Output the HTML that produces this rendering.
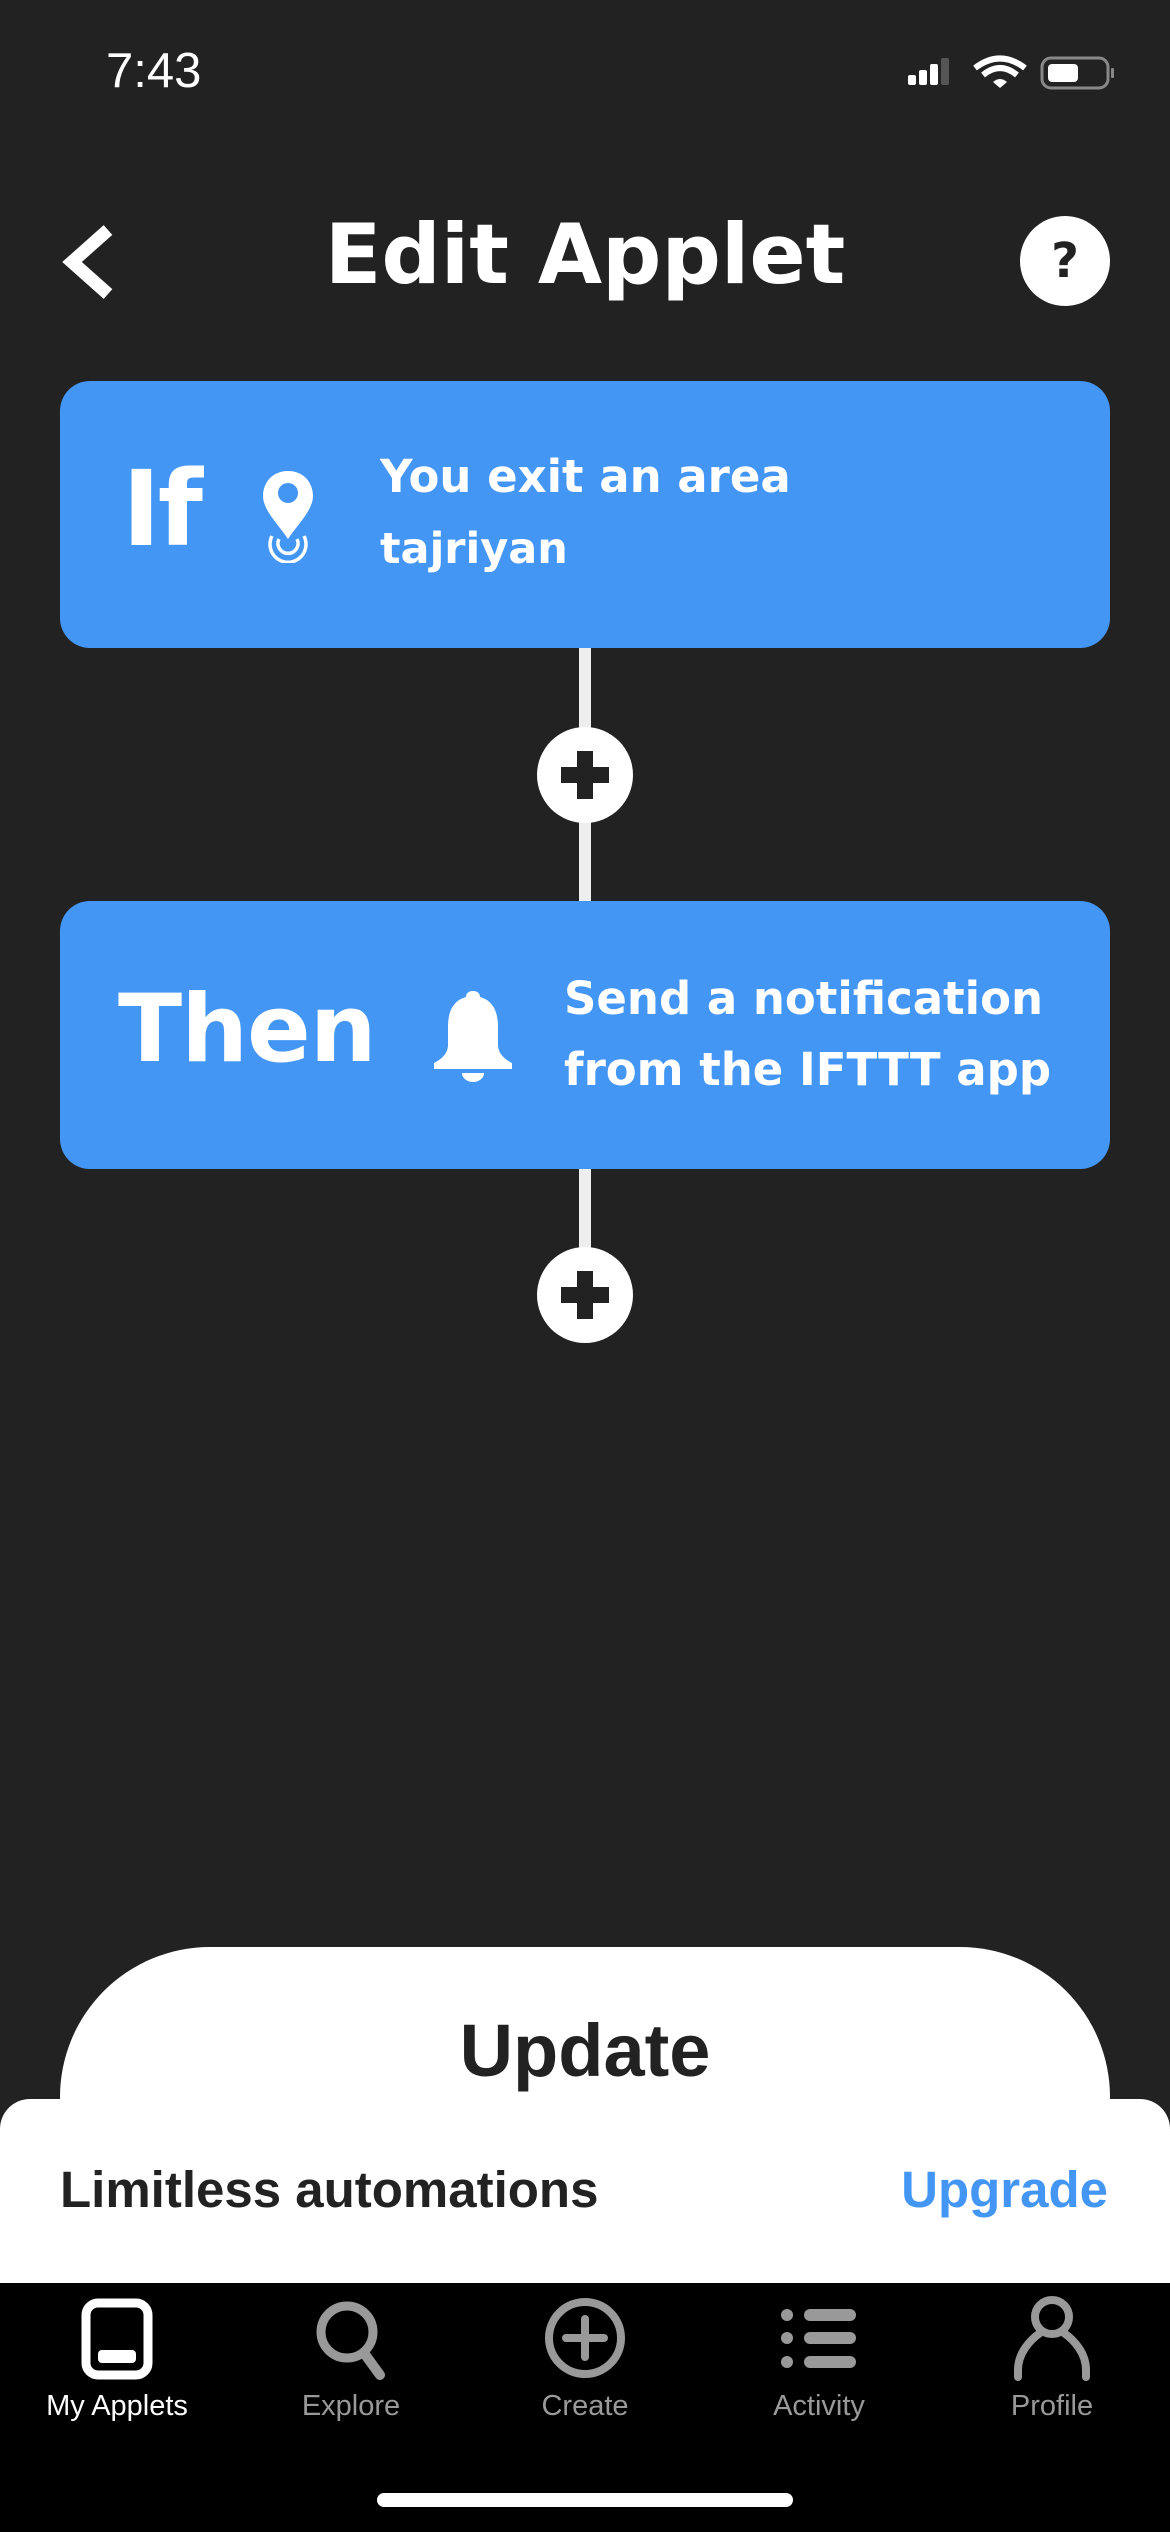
<!DOCTYPE html>
<html><head><meta charset="utf-8"><style>
*{margin:0;padding:0;box-sizing:border-box}
body{width:1170px;height:2532px;background:#222;position:relative;overflow:hidden;font-family:"Liberation Sans",sans-serif;color:#fff}
.a{position:absolute}
.card{position:absolute;left:60px;width:1050px;background:#4496f5;border-radius:30px}
.t{position:absolute;font-weight:bold;white-space:nowrap}
</style></head><body>
<div class="t" style="left:106px;top:43px;font-size:49px;font-weight:normal">7:43</div>
<svg class="a" style="left:900px;top:55px" width="220" height="40">
<rect x="8" y="20" width="8" height="10" rx="2" fill="#fff"/><rect x="19" y="15" width="8" height="15" rx="2" fill="#fff"/><rect x="30" y="9" width="8" height="21" rx="2" fill="#fff"/><rect x="41" y="3" width="8" height="27" rx="2" fill="#555"/>
<path d="M75 13 Q100 -6 125 13" stroke="#fff" stroke-width="6" fill="none"/><path d="M83 20 Q100 6 117 20" stroke="#fff" stroke-width="6" fill="none"/><path d="M93 27 L100 33 L107 27 Q100 21 93 27Z" fill="#fff"/>
<rect x="142" y="3" width="66" height="30" rx="9" stroke="#888" stroke-width="3" fill="none"/><rect x="148" y="9" width="30" height="18" rx="4" fill="#fff"/><rect x="211" y="13" width="3" height="10" rx="1" fill="#888"/>
</svg>
<svg class="a" style="left:58px;top:222px" width="60" height="80"><path d="M50 8 L14 40 L50 72" stroke="#fff" stroke-width="13" fill="none"/></svg>
<div class="t" style="left:0;width:1170px;text-align:center;top:206px;font-size:83px;font-family:'DejaVu Sans',sans-serif">Edit Applet</div>
<div class="a" style="left:1020px;top:216px;width:90px;height:90px;border-radius:50%;background:#fff;color:#222;font-weight:bold;font-size:48px;text-align:center;line-height:90px;font-family:'DejaVu Sans',sans-serif">?</div>

<div class="a" style="left:579px;top:640px;width:12px;height:270px;background:#eee"></div>
<div class="a" style="left:579px;top:1160px;width:12px;height:100px;background:#eee"></div>
<div class="card" style="top:381px;height:267px"></div>
<div class="t" style="left:122px;top:448px;font-size:104px;font-family:'DejaVu Sans',sans-serif;letter-spacing:-3px">If</div>
<svg class="a" style="left:258px;top:468px" width="62" height="95"><path d="M30 3 C14 3 5 15 5 28 C5 42 20 56 30 71 C40 56 55 42 55 28 C55 15 46 3 30 3Z" fill="#fff"/><circle cx="30" cy="25" r="10" fill="#4496f5"/><path d="M14 68 A18 18 0 1 0 46 68" stroke="#fff" stroke-width="3.5" fill="none"/><path d="M21 71 A10 10 0 1 0 39 71" stroke="#fff" stroke-width="3.5" fill="none"/></svg>
<div class="t" style="left:380px;top:450px;font-size:45px;font-family:'DejaVu Sans',sans-serif">You exit an area</div>
<div class="t" style="left:380px;top:524px;font-size:43px;font-family:'DejaVu Sans',sans-serif">tajriyan</div>

<div class="card" style="top:901px;height:268px"></div>
<div class="t" style="left:118px;top:975px;font-size:94px;font-family:'DejaVu Sans',sans-serif;letter-spacing:-1px">Then</div>
<svg class="a" style="left:430px;top:987px" width="86" height="95"><path d="M43 4 C48 4 50 7 50 10 C64 14 68 26 68 40 L68 58 C68 66 74 72 82 76 L82 82 L4 82 L4 76 C12 72 18 66 18 58 L18 40 C18 26 22 14 36 10 C36 7 38 4 43 4Z" fill="#fff"/><path d="M32 86 A11 9 0 0 0 54 86Z" fill="#fff"/></svg>
<div class="t" style="left:564px;top:972px;font-size:45px;font-family:'DejaVu Sans',sans-serif">Send a notification</div>
<div class="t" style="left:564px;top:1043px;font-size:45px;font-family:'DejaVu Sans',sans-serif">from the IFTTT app</div>

<svg class="a" style="left:537px;top:727px" width="96" height="96"><circle cx="48" cy="48" r="48" fill="#fff"/><rect x="24" y="40" width="48" height="16" fill="#222"/><rect x="40" y="24" width="16" height="48" fill="#222"/></svg>
<svg class="a" style="left:537px;top:1247px" width="96" height="96"><circle cx="48" cy="48" r="48" fill="#fff"/><rect x="24" y="40" width="48" height="16" fill="#222"/><rect x="40" y="24" width="16" height="48" fill="#222"/></svg>

<div class="a" style="left:60px;top:1947px;width:1050px;height:300px;border-radius:150px/150px;background:#fff"></div>
<div class="t" style="left:0;width:1170px;text-align:center;top:2008px;font-size:74px;color:#222">Update</div>
<div class="a" style="left:0;top:2099px;width:1170px;height:200px;background:#fff;border-radius:30px 30px 0 0"></div>
<div class="t" style="left:60px;top:2160px;font-size:51px;color:#222">Limitless automations</div>
<div class="t" style="right:62px;top:2160px;font-size:51px;color:#4496f5">Upgrade</div>

<div class="a" style="left:0;top:2283px;width:1170px;height:249px;background:#000"></div>
<svg class="a" style="left:0;top:2295px" width="1170" height="90">
<rect x="86" y="8" width="62" height="72" rx="12" stroke="#fff" stroke-width="9" fill="none"/><rect x="98" y="55" width="38" height="13" rx="4" fill="#fff"/>
<circle cx="347" cy="37" r="26" stroke="#999" stroke-width="9" fill="none"/><path d="M364 58 L380 80" stroke="#999" stroke-width="10" stroke-linecap="round"/>
<circle cx="585" cy="43" r="36" stroke="#999" stroke-width="8" fill="none"/><path d="M585 24 V62 M566 43 H604" stroke="#999" stroke-width="8" stroke-linecap="round"/>
<g fill="#999"><circle cx="787" cy="20" r="6"/><circle cx="787" cy="43" r="6"/><circle cx="787" cy="67" r="6"/><rect x="804" y="14" width="52" height="12" rx="6"/><rect x="804" y="37" width="52" height="12" rx="6"/><rect x="804" y="61" width="52" height="12" rx="6"/></g>
<circle cx="1052" cy="22" r="17" stroke="#999" stroke-width="8" fill="none"/><path d="M1018 82 L1018 75 C1018 58 1030 45 1040 38 M1086 82 L1086 75 C1086 58 1074 45 1064 38" stroke="#999" stroke-width="8" fill="none" stroke-linecap="round"/>
</svg>
<div class="a" style="left:0;top:2390px;width:1170px;font-size:29px;color:#999">
<span class="a" style="left:17px;width:200px;text-align:center;color:#fff">My Applets</span>
<span class="a" style="left:251px;width:200px;text-align:center">Explore</span>
<span class="a" style="left:485px;width:200px;text-align:center">Create</span>
<span class="a" style="left:719px;width:200px;text-align:center">Activity</span>
<span class="a" style="left:952px;width:200px;text-align:center">Profile</span>
</div>
<div class="a" style="left:377px;top:2493px;width:416px;height:14px;border-radius:7px;background:#fff"></div>
</body></html>
